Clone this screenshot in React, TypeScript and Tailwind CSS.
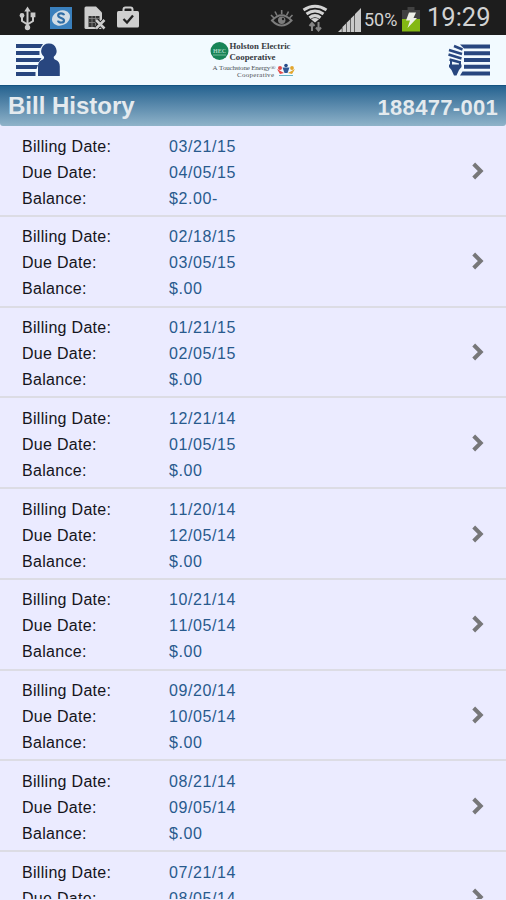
const bills = [
  ['03/21/15', '04/05/15', '$2.00-'],
  ['02/18/15', '03/05/15', '$.00'],
  ['01/21/15', '02/05/15', '$.00'],
  ['12/21/14', '01/05/15', '$.00'],
  ['11/20/14', '12/05/14', '$.00'],
  ['10/21/14', '11/05/14', '$.00'],
  ['09/20/14', '10/05/14', '$.00'],
  ['08/21/14', '09/05/14', '$.00'],
  ['07/21/14', '08/05/14', '$.00'],
];

const labels = ['Billing Date:', 'Due Date:', 'Balance:'];

function UsbIcon() {
  return (
    <svg width="18" height="25" viewBox="0 0 18 25" fill="none" stroke="#c9c9c9" strokeWidth="2">
      <path d="M8.500 4v17M8.500 18.500L3 15V9.500M8.500 18.500L14 15V9" />
      <path d="M8.500 0.500l3.200 5h-6.400z" fill="#c9c9c9" stroke="none" />
      <circle cx="3" cy="9.500" r="2.400" fill="#c9c9c9" stroke="none" />
      <path d="M11.600 6.500h4.800v4.800h-4.800z" fill="#c9c9c9" stroke="none" />
      <circle cx="8.500" cy="21.500" r="2.700" fill="#c9c9c9" stroke="none" />
    </svg>
  );
}

function SyncIcon() {
  return (
    <svg width="22" height="22" viewBox="0 0 22 22">
      <path d="M0 0h22v22H0z" fill="#3a80bd" />
      <ellipse cx="11" cy="11" rx="9.300" ry="7.300" fill="#d2dde6" transform="rotate(-25 11 11)" />
      <path d="M14 8.300C13.500 5.800 8.200 5.700 8.200 8.500c0 2.900 5.800 2 5.800 4.900 0 2.800-5.500 2.800-6 .2" fill="none" stroke="#2f6da5" strokeWidth="2.200" />
    </svg>
  );
}

function SimIcon() {
  return (
    <svg width="22" height="24" viewBox="0 0 22 24">
      <path d="M0.500 2Q0.500 0.500 2 0.500h10l6 6V23H2Q0.500 23 0.500 21.500z" fill="#cdcdcd" />
      <path d="M4.500 10h11v11h-11z" fill="#333" />
      <path d="M5 12.500h10M5 16.500h10M8 10v11M11.500 10v11" stroke="#888" strokeWidth="0.800" />
      <path d="M12 14l8.500 8.500M20.500 14L12 22.500" stroke="#1c1c1c" strokeWidth="4.500" />
      <path d="M12 14l8.500 8.500M20.500 14L12 22.500" stroke="#cdcdcd" strokeWidth="2.600" />
    </svg>
  );
}

function BagIcon() {
  return (
    <svg width="22" height="22" viewBox="0 0 22 22">
      <path d="M6.500 6V3.500q0-2 2-2h5q2 0 2 2V6" fill="none" stroke="#cfcfcf" strokeWidth="2" />
      <rect y="5" width="22" height="16.500" rx="1.500" fill="#cfcfcf" />
      <path d="M6.500 13l3.500 3.500 6-7" fill="none" stroke="#222" strokeWidth="2.300" />
    </svg>
  );
}

function EyeIcon() {
  return (
    <svg width="24" height="19" viewBox="0 0 24 19" fill="none" stroke="#7c7c7c" strokeWidth="2">
      <path d="M2 11.500Q11.500 1 21.500 11.500Q11.500 21.500 2 11.500z" />
      <circle cx="11.700" cy="11.300" r="3.700" fill="#7c7c7c" stroke="none" />
      <path d="M11.700 1v4M5 2.500l2 4M18.500 2.500l-2 4M1 6l3 3M22.500 6l-3 3" strokeWidth="1.600" />
      <circle cx="13" cy="10" r="1.200" fill="#222" stroke="none" />
    </svg>
  );
}

function WifiIcon() {
  return (
    <svg width="26" height="28" viewBox="0 0 26 28" fill="none">
      <path d="M1.500 6Q13-1.500 24.500 6M4.500 10Q13 4 21.500 10M7.500 13.700Q13 9.500 18.500 13.700" stroke="#d4d4d4" strokeWidth="3" />
      <path d="M13 18.500l-4-3.200Q13 12.500 17 15.300z" fill="#d4d4d4" />
      <path d="M10 27v-8M7.500 22l2.500-3 2.500 3M16.500 18v8M14 23.500l2.500 3 2.500-3" stroke="#858585" strokeWidth="2" />
    </svg>
  );
}

function SignalIcon() {
  return (
    <svg width="24" height="25" viewBox="0 0 24 25">
      <path d="M0 24l3.800-3.700V24zM4.400 24v-5l3.600-3.400V24zM8.600 24v-9.200l3.600-3.500V24zM12.800 24V10.500L16.400 7v17zM17 24V6L23 0v24z" fill="#c9c9c9" />
    </svg>
  );
}

function BatteryIcon() {
  return (
    <svg width="18" height="25" viewBox="0 0 18 25">
      <path d="M5.500 0h7v3H18v9H0V3h5.500z" fill="#414141" />
      <path d="M0 12h18v12.500H0z" fill="#84b814" />
      <path d="M7 5.500h7L11.500 11H15L5.500 21 8 13.500H4z" fill="#eef1e9" />
    </svg>
  );
}

function AccountIcon() {
  return (
    <svg width="46" height="34" viewBox="0 0 46 34">
      <path d="M0 1h27l-2.500 4H0zM0 8h23.500v4H0zM0 15h25.500l-2.500 4H0zM0 22h22l-1.500 4H0zM0 29h19.500v4H0z" fill="#28467f" />
      <path d="M33 0.500a7.500 7.500 0 0 1 4.800 13.300q-.5 2.200 2.200 3.200 3.800 1.800 3.800 6.500v9.500H22v-9.500q0-4.700 3.800-6.500 2.700-1 2.200-3.200A7.500 7.500 0 0 1 33 .5z" fill="#28467f" />
    </svg>
  );
}

function UsageIcon() {
  return (
    <svg width="44" height="33" viewBox="0 0 44 33" fill="#28467f">
      <path d="M12 .5h30v4H16zM16 7.200h26v4H16zM16 14h26v4H16zM16 20.700h26v4H16zM14.500 27.500H42v4H12z" />
      <path d="M6 2l8.500 3.500M1 6l13 4M.5 10.500l13 4M1.500 15.500l11 3" stroke="#28467f" strokeWidth="2.500" />
      <path d="M3 16.500v5M12 17v5" stroke="#28467f" strokeWidth="2" />
      <path d="M1 20.500h12.500v2.500l-2.500 3-2.500 5.500H6L3.500 26 1 23z" />
    </svg>
  );
}

function Logo() {
  return (
    <svg width="90" height="40" viewBox="0 0 90 40" fontFamily="Liberation Serif, serif">
      <circle cx="10.500" cy="11" r="9" fill="#178457" />
      <text x="4" y="13" fontSize="6" fontWeight="bold" fill="#a8d7c2" textLength="13">HEC</text>
      <path d="M4 15h13" stroke="#72b898" strokeWidth="1" />
      <g fontWeight="bold" fontSize="8.800" fill="#36393e">
        <text x="20.500" y="9" textLength="61">Holston Electric</text>
        <text x="20.500" y="19.500" textLength="46">Cooperative</text>
      </g>
      <g fontSize="7" fill="#4c5055">
        <text x="3.500" y="29.500" textLength="63">A Touchstone Energy®</text>
        <text x="28" y="36.500" textLength="37">Cooperative</text>
      </g>
      <g>
        <circle cx="71" cy="28" r="2" fill="#e34a48" />
        <circle cx="77" cy="25.500" r="1.800" fill="#274d8b" />
        <circle cx="83" cy="28" r="1.900" fill="#e2a52d" />
        <path d="M68 29l7 4-4 1z" fill="#e34a48" />
        <path d="M73.500 27.500h7L78.500 33h-3z" fill="#315a97" />
        <path d="M86 29l-7 4 4 1z" fill="#e2a52d" />
        <path d="M70 35.500h14" stroke="#6bb5c6" strokeWidth="1" />
      </g>
    </svg>
  );
}

export default function App() {
  return (
    <div className="flex h-[900px] w-[506px] flex-col overflow-hidden bg-[#ebebff] font-['Liberation_Sans',Arial,sans-serif] [font-kerning:none]">
      <div className="flex h-[35px] shrink-0 items-start bg-[#1d1d1d] font-[Roboto,sans-serif] text-[#d2d2d2]">
        <div className="ml-[19px] mt-[6px]"><UsbIcon /></div>
        <div className="ml-[13px] mt-[7px]"><SyncIcon /></div>
        <div className="ml-[12px] mt-[6px]"><SimIcon /></div>
        <div className="ml-[11px] mt-[6px]"><BagIcon /></div>
        <div className="ml-[131px] mt-[9px]"><EyeIcon /></div>
        <div className="ml-[8px] mt-[4px]"><WifiIcon /></div>
        <div className="ml-[10px] mt-[8px]"><SignalIcon /></div>
        <span className="ml-[2px] mt-[9px] w-[38px] text-[18px] leading-[22px]">50%</span>
        <div className="mt-[7px]"><BatteryIcon /></div>
        <span className="ml-[7px] mt-[2px] text-[25.5px] leading-[30px]">19:29</span>
      </div>

      <header className="flex h-[50px] shrink-0 items-start justify-between bg-[#f2faff] pl-4 pr-[14px]">
        <div className="mt-[8px]"><AccountIcon /></div>
        <div className="mt-[5px] -ml-[3px]"><Logo /></div>
        <div className="mt-[9px]"><UsageIcon /></div>
      </header>

      <div className="flex h-[41px] shrink-0 items-start justify-between rounded-b-[3px] border-t border-[#155380] bg-linear-to-b from-[#246390] to-[#8fb3c9] pl-2 pr-2 font-bold text-[#e4eaee]">
        <h1 className="text-[24px] leading-[40px]">Bill History</h1>
        <span className="pt-[6px] text-[22px] leading-[32px] tracking-[0.3px]">188477-001</span>
      </div>

      <ul className="h-[773px] overflow-hidden">
        {bills.map((bill) => (
          <li key={bill[0]} className="flex h-[90.75px] items-start justify-between border-b-2 border-[#dcdce4] pl-[22px] pr-[21px] pt-[7.5px]">
            <dl className="text-base leading-[26px]">
              {labels.map((label, i) => (
                <div key={label} className="flex">
                  <dt className="w-[147px] tracking-[0.3px] text-[#15151b]">{label}</dt>
                  <dd className="tracking-[0.6px] text-[#285a8d]">{bill[i]}</dd>
                </div>
              ))}
            </dl>
            <svg className="mt-[28px]" width="14" height="18" viewBox="0 0 14 18" fill="none">
              <path d="M2.700 2l7 7-7 7" stroke="#777779" strokeWidth="4" />
            </svg>
          </li>
        ))}
      </ul>
    </div>
  );
}
